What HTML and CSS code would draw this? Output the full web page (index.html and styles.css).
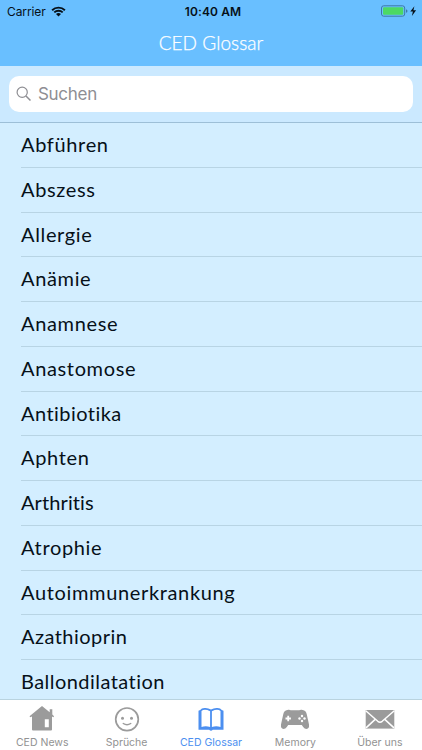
FILE: index.html
```
<!DOCTYPE html>
<html lang="de">
	<head>
		<meta charset="UTF-8">
		<title>CED Glossar</title>
		<link rel="stylesheet" href="styles.css">
	</head>
	<body>

		<div class="app">

			<!-- Kopfbereich -->
			<div class="header">
				<div class="status">
					<div class="status-left">
						<span class="carrier">Carrier</span>
						<svg class="wifi" viewBox="0 0 15 11" width="15" height="11">
							<path d="M1.1 4.2a9.2 9.2 0 0 1 12.8 0M3.3 6.4a6 6 0 0 1 8.4 0" fill="none" stroke="#061018" stroke-width="1.9"/>
							<path d="M5 8.1a3.6 3.6 0 0 1 5 0L7.500 10.600z" fill="#061018"/>
						</svg>
					</div>
					<div class="time">10:40 AM</div>
					<div class="status-right">
						<svg class="battery" viewBox="0 0 36 12" width="36" height="12">
							<rect x=".5" y=".8" width="23.200" height="10.400" rx="2.200" fill="none" stroke="#3e79a6"/>
							<rect x="2" y="2.300" width="20.200" height="7.400" rx="1" fill="#4cd964"/>
							<path d="M25 4.200q1.500.4 1.500 1.800T25 7.800z" fill="#3e79a6"/>
							<path d="M33.400 1.200L29.300 6.600h2.600l-1 4.300 4.200-5.600h-2.700z" fill="#061018"/>
						</svg>
					</div>
				</div>
				<div class="title"><span>CED Glossar</span></div>
			</div>

			<!-- Suche -->
			<div class="search">
				<div class="search-box">
					<svg viewBox="0 0 16 16" width="16" height="16">
						<circle cx="6.200" cy="6.200" r="5.100" fill="none" stroke="#8e8e93" stroke-width="1.200"/>
						<path d="M10 10l4.500 4.500" stroke="#8e8e93" stroke-width="1.500"/>
					</svg>
					<span>Suchen</span>
				</div>
			</div>

			<!-- Begriffe -->
			<ul class="list">
				<li>Abführen</li>
				<li>Abszess</li>
				<li>Allergie</li>
				<li>Anämie</li>
				<li>Anamnese</li>
				<li>Anastomose</li>
				<li class="medium">Antibiotika</li>
				<li>Aphten</li>
				<li class="narrow">Arthritis</li>
				<li>Atrophie</li>
				<li>Autoimmunerkrankung</li>
				<li class="medium">Azathioprin</li>
				<li class="medium">Ballondilatation</li>
			</ul>

			<!-- Tableiste -->
			<div class="tabs">
				<div class="tab">
					<svg viewBox="0 0 32 28" width="32" height="28">
						<path fill="#9b9b9b" fill-rule="evenodd" d="M16 2L3.500 12.300l.8 1L6 12.600V25.500q0 1 1 1H25q1 0 1-1V12.600l1.300.7.800-1L26.300 10.500V5.200h-2.600V8.200zM18.800 15.300h4v8h-4z"/>
					</svg>
					<span>CED News</span>
				</div>
				<div class="tab">
					<svg viewBox="0 0 32 28" width="32" height="28">
						<circle cx="16" cy="15.300" r="11.300" fill="none" stroke="#9b9b9b" stroke-width="1.700"/>
						<circle cx="11.500" cy="14.200" r="1.500" fill="#9b9b9b"/>
						<circle cx="20.500" cy="14.200" r="1.500" fill="#9b9b9b"/>
						<path d="M12.300 19.500q3.700 2.600 7.400 0" fill="none" stroke="#9b9b9b" stroke-width="1.500" stroke-linecap="round"/>
					</svg>
					<span>Sprüche</span>
				</div>
				<div class="tab active">
					<svg viewBox="0 0 32 28" width="32" height="28">
						<path fill="#4c8ff0" fill-rule="evenodd" d="M16 5.500Q13 3.700 9.500 4 6.500 4.200 5.200 6L3.500 6.800V25.800H14.200q1.800 1.700 3.600 0H28.500V6.800L26.800 6Q25.500 4.200 22.500 4 19 3.700 16 5.500zM15.100 7.200V23Q11 21.800 6.500 22.900V7Q9.500 4.500 15.100 7.200zM16.900 7.200Q22.500 4.500 25.500 7V22.900Q21 21.800 16.900 23z"/>
					</svg>
					<span>CED Glossar</span>
				</div>
				<div class="tab">
					<svg viewBox="0 0 32 28" width="32" height="28">
						<path fill="#9b9b9b" d="M7.500 6.300q1-.8 2.500-.6l1.800.5h8.400l1.800-.5q1.500-.2 2.500.6 2.500.5 3.300 4.200L30 20.500q.5 4.300-2.500 4.400-2 0-3.300-2L22.800 21H9.200L7.800 22.900Q6.500 24.900 4.500 24.900 1.500 24.800 2 20.500L4.200 10.500Q5 6.800 7.500 6.300z"/>
						<path d="M9.200 11.800v5.400M6.500 14.500h5.400" stroke="#fff" stroke-width="1.800"/>
						<g fill="#fff">
							<circle cx="23" cy="12" r="1.200"/>
							<circle cx="23" cy="17" r="1.200"/>
							<circle cx="20.500" cy="14.500" r="1.200"/>
							<circle cx="25.500" cy="14.500" r="1.200"/>
						</g>
					</svg>
					<span>Memory</span>
				</div>
				<div class="tab">
					<svg viewBox="0 0 32 28" width="32" height="28">
						<path fill="#9b9b9b" d="M1.700 6h28.600v18.600H1.700z"/>
						<path d="M1.700 6.800L13.800 17.300q2.200 1.800 4.400 0L30.300 6.800M2 23.900l9.200-8.500M30 23.900l-9.200-8.500" fill="none" stroke="#fff" stroke-width="1.500"/>
					</svg>
					<span>Über uns</span>
				</div>
			</div>

		</div>

	</body>
</html>
```
FILE: styles.css
```
*{
	margin: 0;
	padding: 0;
	box-sizing: border-box;
}

.app{
	width: 422px;
	height: 750px;
	display: flex;
	flex-direction: column;
	overflow: hidden;
	background-color: #d3eeff;
	font-family: Lato, sans-serif;
	color: #061018;
}

/*Kopfbereich*/
.header{
	flex: none;
	height: 66px;
	background-color: #69bfff;
}

.status{
	height: 22px;
	padding: 0 5px 0 7px;
	display: grid;
	grid-template-columns: 1fr auto 1fr;
	align-items: center;
	font-family: Inter, sans-serif;
	font-size: 12px;
}

.status-left{
	display: flex;
	align-items: center;
	gap: 5px;
}

.carrier{
	letter-spacing: -0.1px;
}

.wifi{
	display: block;
}

.time{
	padding-left: 2px;
	font-weight: 600;
	letter-spacing: 0.1px;
}

.status-right{
	display: flex;
	justify-content: flex-end;
}

.title{
	height: 44px;
	line-height: 42px;
	text-align: center;
	font-size: 19px;
	font-weight: 300;
	letter-spacing: 0.05px;
	color: #fff;
	-webkit-text-stroke: 0.25px #fff;
}

/*Suche*/
.search{
	flex: none;
	height: 57px;
	padding: 10px 9px;
	background-color: #cbe9ff;
	border-bottom: 1px solid #9dbfd7;
}

.search-box{
	height: 36px;
	padding-left: 7px;
	display: flex;
	align-items: center;
	gap: 6px;
	border-radius: 10px;
	background-color: #fff;
	font-family: Inter, sans-serif;
	font-size: 17px;
	letter-spacing: -0.3px;
	color: #8e8e93;
}

/*Begriffe*/
.list{
	flex: 1;
	min-height: 0;
	overflow: hidden;
	list-style: none;
}

.list li{
	height: 44.75px;
	margin-left: 21px;
	line-height: 42px;
	font-size: 20px;
	letter-spacing: 0.65px;
	border-bottom: 1px solid #b8d4e4;
}

.list .medium{
	letter-spacing: 0.45px;
}

.list .narrow{
	letter-spacing: 0.1px;
}

/*Tableiste*/
.tabs{
	flex: none;
	height: 51px;
	display: flex;
	background-color: #fff;
	border-top: 1px solid #b9d3df;
}

.tab{
	flex: 1;
	padding-top: 4px;
	display: flex;
	flex-direction: column;
	align-items: center;
	font-family: Inter, sans-serif;
	font-size: 10.5px;
	line-height: 13px;
	letter-spacing: 0;
	color: #929292;
}

.tab svg{
	display: block;
	margin-bottom: 4px;
}

.active{
	color: #4c8ff0;
}
```
